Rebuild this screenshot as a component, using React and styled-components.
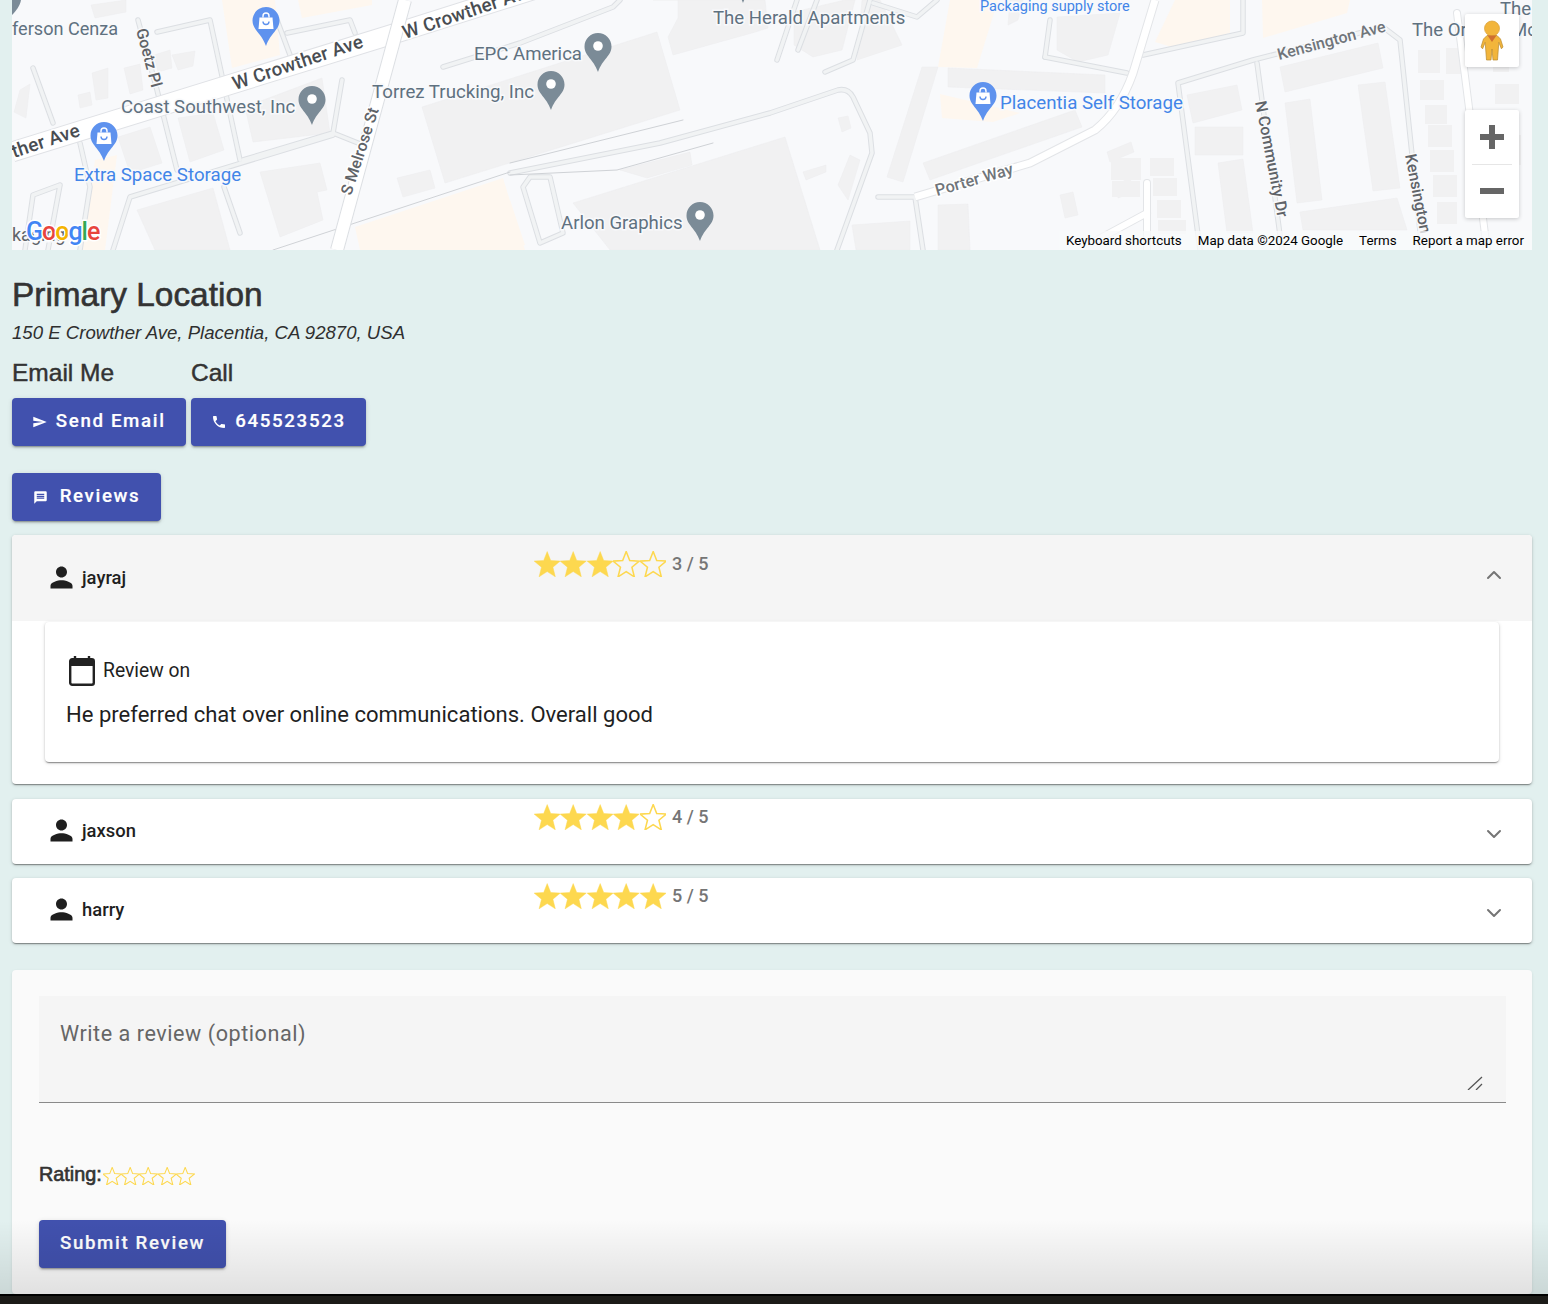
import React from 'react';
import styled, { createGlobalStyle } from 'styled-components';
import { ChevronDown, ChevronUp } from 'lucide-react';

const indigo = '#4151ae';
const star = '#fdd84f';

const cardShadow = '0 2px 1px -1px rgba(0,0,0,.28), 0 1px 2px 0 rgba(0,0,0,.2), 0 1px 4px 0 rgba(0,0,0,.12)';

const GlobalStyle = createGlobalStyle`
  html, body {
    margin: 0;
    padding: 0;
    height: 1304px;
    overflow: hidden;
    background: #e2f0ef;
    font-family: "Liberation Sans", Arial, sans-serif;
  }
`;

const Page = styled.div`
  position: relative;
  height: 1304px;
  display: flex;
  flex-direction: column;
`;
const Content = styled.main`
  flex: 1;
  padding: 0 16px 0 12px;
`;
const MapFrame = styled.div`
  position: relative;
  height: 250px;
  overflow: hidden;
  background: #f8f9fb;
  svg.base {
    display: block;
  }
`;
const ControlBox = styled.div`
  position: absolute;
  left: 1453px;
  top: ${p => p.$top}px;
  width: 54px;
  height: ${p => p.$height}px;
  background: #fff;
  border-radius: 2px;
  box-shadow: 0 1px 4px rgba(0, 0, 0, 0.2);
  display: flex;
  flex-direction: column;
  align-items: center;
  justify-content: center;
`;
const ZoomCell = styled.div`
  flex: 1;
  display: flex;
  align-items: center;
  justify-content: center;
  width: 100%;
`;
const ZoomRule = styled.div`
  width: 40px;
  height: 1px;
  background: #e6e6e6;
`;
const Attribution = styled.div`
  position: absolute;
  right: 0;
  bottom: 0;
  height: 19px;
  padding: 0 8px 1px 7px;
  box-sizing: border-box;
  display: flex;
  align-items: center;
  gap: 16px;
  background: rgba(248, 249, 251, 0.75);
  font-family: Roboto, sans-serif;
  font-size: 13.35px;
  color: #000;
  white-space: nowrap;
`;

const Title = styled.h2`
  margin: 27px 0 0;
  font-size: 33.4px;
  line-height: 36px;
  font-weight: 400;
  color: #333;
  -webkit-text-stroke: 0.6px #333;
`;
const Address = styled.p`
  margin: 9px 0 0;
  font-size: 18.6px;
  line-height: 22px;
  font-style: italic;
  color: #2f2f2f;
`;
const ContactRow = styled.div`
  display: flex;
  gap: 5px;
  margin-top: 15px;
`;
const ContactCol = styled.div`
  display: flex;
  flex-direction: column;
  gap: 11px;
`;
const ContactLabel = styled.h4`
  margin: 0;
  font-size: 24.5px;
  line-height: 28px;
  font-weight: 400;
  color: #333;
  -webkit-text-stroke: 0.45px #333;
`;
const Button = styled.button`
  display: inline-flex;
  align-items: center;
  justify-content: center;
  gap: ${p => p.$gap || 8}px;
  height: 48px;
  width: ${p => p.$width}px;
  padding: 0 0 2px;
  border: 0;
  border-radius: 4px;
  background: ${indigo};
  color: #fff;
  font-family: Roboto, sans-serif;
  font-weight: 500;
  font-size: 18.7px;
  letter-spacing: 1.65px;
  -webkit-text-stroke: 0.2px #fff;
  box-shadow: 0 3px 1px -2px rgba(0,0,0,.2), 0 2px 2px 0 rgba(0,0,0,.14), 0 1px 5px 0 rgba(0,0,0,.12);
  svg {
    margin-top: 2px;
  }
`;
const ReviewsButton = styled(Button)`
  display: flex;
  margin: 27px 0 14px;
`;
const Accordion = styled.section`
  background: #fff;
  border-radius: 4px;
  margin-bottom: ${p => p.$gap}px;
  box-shadow: ${cardShadow};
`;
const Summary = styled.div`
  display: flex;
  align-items: flex-start;
  height: ${p => (p.$open ? 86 : 65)}px;
  padding-left: 32.5px;
  padding-right: 26px;
  background: ${p => (p.$open ? '#f5f5f5' : 'transparent')};
  border-radius: 4px 4px 0 0;
`;
const Reviewer = styled.div`
  display: flex;
  align-items: center;
  gap: 4.5px;
  width: 489.5px;
  margin-top: ${p => (p.$open ? 26 : 15)}px;
  font-family: Roboto, sans-serif;
  font-weight: 500;
  font-size: 18.4px;
  line-height: 33px;
  color: #1f1f1f;
`;
const Score = styled.div`
  display: flex;
  align-items: flex-start;
  gap: 6px;
  margin-top: ${p => (p.$open ? 16 : 5)}px;
  font-family: Roboto, sans-serif;
  font-weight: 500;
  font-size: 18px;
  line-height: 26px;
  color: #757575;
`;
const Stars = styled.div`
  display: flex;
  svg {
    display: block;
  }
`;
const Chevron = styled.div`
  margin-left: auto;
  margin-top: ${p => (p.$open ? 28 : 23)}px;
  color: #757575;
  line-height: 0;
`;
const Details = styled.div`
  padding: 1px 33px 22px;
`;
const InnerCard = styled.div`
  height: 140px;
  box-sizing: border-box;
  padding: 34px 21px 0;
  background: #fff;
  border-radius: 4px;
  box-shadow: ${cardShadow};
`;
const ReviewDate = styled.div`
  display: flex;
  align-items: center;
  gap: 7px;
  padding-left: 2px;
  font-family: Roboto, sans-serif;
  font-size: 19.3px;
  line-height: 30px;
  color: #1f1f1f;
`;
const ReviewText = styled.p`
  margin: 13px 0 0;
  font-family: Roboto, sans-serif;
  font-size: 22.05px;
  line-height: 32px;
  color: #1f1f1f;
`;
const FormPanel = styled.form`
  height: 324px;
  box-sizing: border-box;
  margin-top: 27px;
  padding: 26px 26px 0 27px;
  background: #fafafa;
  border-radius: 4px;
  box-shadow: 0 1px 3px rgba(0,0,0,.1);
`;
const FakeTextarea = styled.div`
  position: relative;
  height: 107px;
  box-sizing: border-box;
  padding: 24px 21px 0;
  background: #f5f5f5;
  border-bottom: 1px solid #8a8a8a;
  font-family: Roboto, sans-serif;
  font-size: 21.6px;
  line-height: 28px;
  letter-spacing: 0.54px;
  color: #666;
`;
const Grip = styled.svg`
  position: absolute;
  right: 23px;
  bottom: 12px;
`;
const RatingRow = styled.div`
  display: flex;
  align-items: center;
  margin-top: 59px;
  height: 28px;
`;
const RatingLabel = styled.label`
  font-size: 19.8px;
  font-weight: 400;
  color: #333;
  -webkit-text-stroke: 0.65px #333;
  margin-top: -3px;
  margin-right: 1px;
`;
const SubmitRow = styled.div`
  margin-top: 30px;
`;
const BottomBar = styled.div`
  position: relative;
  height: 10px;
  border-top: 2px solid #000;
  box-sizing: border-box;
  background: #1c1b18;
`;
const Shade = styled.div`
  position: absolute;
  left: 0;
  right: 0;
  bottom: 10px;
  height: 74px;
  pointer-events: none;
  background: linear-gradient(to bottom, rgba(0,0,0,0), rgba(0,0,0,.1));
`;

const MapText = styled.text`
  font-family: Roboto, sans-serif;
  font-size: ${p => p.$size || 18}px;
  font-weight: ${p => p.$weight || 400};
  fill: ${p => p.$fill || '#5f7180'};
  stroke: ${p => p.$halo || '#f8f9fb'};
  stroke-width: 3px;
  paint-order: stroke;
  letter-spacing: ${p => p.$spacing || 0}px;
`;

const buildings = [
  [422,107,657,32,680,110,445,183], [573,203,785,137,820,250,610,250], [137,210,213,188,230,250,155,250],
  [260,172,320,163,327,190,317,192,323,220,280,237], [245,107,322,78,330,133,253,142], [178,118,213,113,224,150,190,162],
  [118,137,150,127,162,163,130,173], [397,178,430,170,435,188,403,197], [653,0,678,0,678,18,668,37,673,55,752,33,768,28,765,0],
  [887,177,922,67,938,67,903,182], [923,163,1075,110,1082,127,930,180], [948,68,1105,75,1105,93,948,87],
  [1057,17,1120,13,1108,55,1078,62,1057,50], [1187,95,1237,85,1242,110,1193,123], [1195,127,1243,127,1243,155,1195,155],
  [1218,163,1243,159,1253,233,1227,233], [1285,103,1310,99,1322,200,1297,203], [1280,67,1378,43,1383,68,1285,92],
  [1358,85,1385,82,1400,188,1373,191], [1300,212,1397,198,1407,230,1303,230], [91,5,126,0,126,12,95,18],
  [92,73,108,68,108,98,96,100], [124,68,140,64,143,90,130,94], [78,95,90,92,92,105,80,108], [20,90,30,84,26,118,14,112],
  [154,55,170,50,172,68,158,72], [172,55,195,51,193,66,178,70], [794,12,845,0,855,0,842,50,813,57,794,45],
  [862,0,880,0,902,45,857,60], [1010,0,1023,0,1018,20,1008,25], [1060,195,1073,192,1078,215,1065,218],
  [838,118,848,116,851,128,842,132], [803,172,826,165,826,172,806,180], [838,185,850,155,860,160,848,200],
  [852,225,910,221,910,250,856,250], [938,205,968,204,970,250,938,250], [620,170,690,152,692,165,647,178],
  [1115,185,1130,178,1134,192,1118,198], [1107,152,1131,142,1134,152,1110,162]
];
const blocks = [
  [1418,50,22,23],[1420,80,24,20],[1425,105,22,19],[1428,125,24,22],[1430,150,24,22],[1433,175,24,22],[1437,202,20,22],[1446,48,18,26],
  [1493,50,16,22],[1495,84,24,20],[1499,135,22,30],[1488,178,20,28],[1111,158,30,22],[1150,158,24,18],[1153,178,24,18],[1157,200,24,18],
  [1112,181,28,16],[1158,220,28,14]
];
const beiges = [
  [222,0,275,0,280,55,232,68], [298,0,372,0,372,5,302,18], [355,227,503,178,525,250,360,250], [95,160,117,155,105,250,82,250],
  [938,67,977,68,998,0,950,0], [940,94,1020,113,993,122,942,118], [1155,42,1175,48,1230,33,1230,0,1175,0],
  [1262,0,1350,0,1347,13,1263,38], [510,200,525,245,510,250]
];
const lanes = [
  'M138 20L157 90L177 170M224 187L240 233', 'M157 32L210 20L240 160', 'M287 33L350 20L355 33M277 20L290 55',
  'M33 68L53 123M80 143L90 187L80 250', 'M342 80L333 133L243 160M333 133L358 143', 'M333 135L130 197L113 250',
  'M443 67L520 43L613 7L620 0', 'M510 173L660 143L770 113L838 90Q848 88 853 97L870 133L872 153L837 250',
  'M523 187L530 177L550 177L563 233L540 243Z', 'M878 197L915 197L923 250', 'M797 0L777 60', 'M817 0L798 50',
  'M870 0L853 60L825 72', 'M873 3L917 17L937 0', 'M1243 0L1243 33L1143 55', 'M1045 57L1127 73', 'M1050 20L1045 57',
  'M1200 250L1178 83L1253 60L1383 27L1400 40L1422 250', 'M1257 63L1282 250', 'M25 250L33 195L60 185M60 185L48 250'
];
const labels = [
  { x: 12, y: 35, t: 'ferson Cenza', size: 18.1 },
  { x: 136, y: 30, t: 'Goetz Pl', size: 16, weight: 500, fill: '#5f6368', r: 75 },
  { x: 235, y: 90, t: 'W Crowther Ave', size: 18.8, weight: 500, fill: '#494d52', halo: '#fff', r: -18.5, sp: 0.2 },
  { x: 405, y: 39, t: 'W Crowther Ave', size: 18.8, weight: 500, fill: '#494d52', halo: '#fff', r: -18.5, sp: 0.2 },
  { x: 14, y: 158, t: 'ther Ave', size: 18.8, weight: 500, fill: '#494d52', halo: '#fff', r: -18.5, sp: 0.2 },
  { x: 121, y: 113, t: 'Coast Southwest, Inc', size: 18.6 },
  { x: 474, y: 60, t: 'EPC America', size: 18.6 },
  { x: 372, y: 98, t: 'Torrez Trucking, Inc', size: 18.7 },
  { x: 351, y: 196, t: 'S Melrose St', size: 16, weight: 500, fill: '#5f6368', halo: '#fff', r: -72 },
  { x: 74, y: 181, t: 'Extra Space Storage', size: 18.7, fill: '#4285e8' },
  { x: 713, y: 24, t: 'The Herald Apartments', size: 18.6 },
  { x: 980, y: 11, t: 'Packaging supply store', size: 14.5, fill: '#4285e8' },
  { x: 1000, y: 109, t: 'Placentia Self Storage', size: 18.7, fill: '#4285e8' },
  { x: 937, y: 196, t: 'Porter Way', size: 16.3, weight: 500, fill: '#70757a', halo: '#fff', r: -16 },
  { x: 1279, y: 60, t: 'Kensington Ave', size: 16, weight: 500, fill: '#70757a', r: -15 },
  { x: 1255, y: 102, t: 'N Community Dr', size: 16, weight: 500, fill: '#5f6368', r: 79 },
  { x: 1405, y: 155, t: 'Kensington', size: 16, weight: 500, fill: '#5f6368', r: 79 },
  { x: 1412, y: 36, t: 'The Or', size: 18.6 },
  { x: 1500, y: 15, t: 'The', size: 18.6 },
  { x: 1511, y: 36, t: 'Mc', size: 18.6 },
  { x: 561, y: 229, t: 'Arlon Graphics', size: 18.6 },
  { x: 12, y: 241, t: 'kaging', size: 18, fill: '#5f6368' }
];
const grayPins = [[312, 86], [598, 33], [551, 71], [700, 202], [743, -36]];
const bluePins = [[266, 7], [104, 122], [983, 82]];

const points = arr => arr.join(' ');

const Pin = ({ x, y, color, children }) => (
  <g transform={`translate(${x - 13.5} ${y})`}>
    <path
      d="M13.5 0C6 0 0 6 0 13.5 0 23 9 26 13.5 39 18 26 27 23 27 13.5 27 6 21 0 13.5 0Z"
      fill={color}
    />
    {children}
  </g>
);

const MapDrawing = () => (
  <svg className="base" width="1520" height="250" viewBox="12 0 1520 250">
    <rect x="12" y="0" width="1520" height="250" fill="#f8f9fb" />
    {beiges.map((b, i) => <polygon key={i} points={points(b)} fill="#fef7ef" />)}
    {buildings.map((b, i) => <polygon key={i} points={points(b)} fill="#f1f1f2" stroke="#ececee" strokeWidth="0.5" />)}
    {blocks.map(([x, y, w, h], i) => <rect key={i} x={x} y={y} width={w} height={h} fill="#f1f1f2" />)}
    <g fill="none" strokeLinecap="round" strokeLinejoin="round">
      {lanes.map((d, i) => <path key={i} d={d} stroke="#dcdfe3" strokeWidth="5.5" />)}
      {lanes.map((d, i) => <path key={i} d={d} stroke="#f1f3f4" strokeWidth="3.5" />)}
      <path d="M273 250L510 172M510 163L683 120M510 175L617 170L713 143" stroke="#cfd2d6" strokeWidth="1" />
      <path d="M12 152L390 35L545 -14" stroke="#e0e2e6" strokeWidth="21" strokeLinecap="butt" />
      <path d="M12 152L390 35L545 -14" stroke="#fff" strokeWidth="19" strokeLinecap="butt" />
      <path d="M405 0L337 250" stroke="#dcdfe3" strokeWidth="14" strokeLinecap="butt" />
      <path d="M405 0L337 250" stroke="#fff" strokeWidth="12" strokeLinecap="butt" />
      <path d="M1155 0L1133 73Q1120 110 1095 130L1030 163L915 197" stroke="#e3e5e8" strokeWidth="9" strokeLinecap="butt" />
      <path d="M1155 0L1133 73Q1120 110 1095 130L1030 163L915 197" stroke="#fff" strokeWidth="7" strokeLinecap="butt" />
      <path d="M1457 13L1487 250" stroke="#e3e5e8" strokeWidth="8" />
      <path d="M1457 13L1487 250" stroke="#fff" strokeWidth="6" />
      <path d="M1147 183L1147 250M1147 213L1097 240" stroke="#e3e5e8" strokeWidth="8" />
      <path d="M1147 183L1147 250M1147 213L1097 240" stroke="#fff" strokeWidth="6" />
    </g>
    <path d="M12 0H21C20 6 16 11 12 15Z" fill="#7b8b97" />
    {labels.map(l => (
      <MapText
        key={l.t + l.x}
        x={l.x}
        y={l.y}
        $size={l.size}
        $weight={l.weight}
        $fill={l.fill}
        $halo={l.halo}
        $spacing={l.sp}
        transform={l.r ? `rotate(${l.r} ${l.x} ${l.y})` : undefined}
      >
        {l.t}
      </MapText>
    ))}
    {grayPins.map(([x, y]) => (
      <Pin key={x} x={x} y={y} color="#7b8b97">
        <circle cx="13.5" cy="13" r="4.8" fill="#fff" />
      </Pin>
    ))}
    {bluePins.map(([x, y]) => (
      <Pin key={x} x={x} y={y} color="#5e92ee">
        <path d="M7 10.5H20L21 22H6Z" fill="#fff" />
        <path d="M10.5 10.5V9A3 3 0 0 1 16.5 9V10.5" fill="none" stroke="#fff" strokeWidth="1.4" />
        <path d="M10.5 14.5A3 3 0 0 0 16.5 14.5" fill="none" stroke="#5e92ee" strokeWidth="1.4" />
      </Pin>
    ))}
    <MapText x="26" y="240" $size={25} $weight={500} $fill="#4285f4" $halo="#fff" $spacing={-1}>
      G<tspan fill="#e8453c">o</tspan><tspan fill="#f4b400">o</tspan><tspan fill="#4285f4">g</tspan><tspan fill="#34a853">l</tspan><tspan fill="#e8453c">e</tspan>
    </MapText>
  </svg>
);

const Pegman = () => (
  <svg width="24" height="41" viewBox="0 0 24 41">
    <path d="M7 15.5L3.5 19 1 27l1.6 1.8 2.6-6.5L6.5 40h4.5l1-11 1 11h4.5l1.3-17.7 2.6 6.5L23 27l-2.5-8-3.5-3.5Z" fill="#f2b53b" stroke="#b98a2e" strokeWidth="0.7" />
    <circle cx="12" cy="8.5" r="7.5" fill="#f2b53b" stroke="#d89e33" strokeWidth="0.7" />
    <path d="M7.5 15.5H16.5L12 22Z" fill="#cf6f30" />
  </svg>
);

const StarIcon = ({ filled, size }) => (
  <svg width={size} height={size} viewBox="0 0 24 24">
    <polygon
      points="12,0.5 15.2,8.6 23.9,9.2 17.2,14.7 19.4,23.5 12,18.7 4.6,23.5 6.8,14.7 0.1,9.2 8.8,8.6"
      fill={filled ? star : 'none'}
      stroke={star}
      strokeWidth={filled ? 0.4 : 1.4}
    />
  </svg>
);

const StarRow = ({ value = 0, size = 26.4 }) => (
  <Stars>
    {[1, 2, 3, 4, 5].map(n => <StarIcon key={n} size={size} filled={n <= value} />)}
  </Stars>
);

const MuiIcon = ({ d, size = 24, color = 'currentColor', sx = 1 }) => (
  <svg width={size * sx} height={size} viewBox="0 0 24 24" preserveAspectRatio="none" fill={color}>
    <path d={d} />
  </svg>
);

const icons = {
  person: 'M12 12c2.21 0 4-1.79 4-4s-1.79-4-4-4-4 1.79-4 4 1.79 4 4 4zm0 2c-2.67 0-8 1.34-8 4v2h16v-2c0-2.66-5.33-4-8-4z',
  send: 'M2.01 21L23 12 2.01 3 2 10l15 2-15 2z',
  phone: 'M6.62 10.79c1.44 2.83 3.76 5.14 6.59 6.59l2.2-2.2c.27-.27.67-.36 1.02-.24 1.12.37 2.33.57 3.57.57.55 0 1 .45 1 1V20c0 .55-.45 1-1 1-9.39 0-17-7.61-17-17 0-.55.45-1 1-1h3.5c.55 0 1 .45 1 1 0 1.25.2 2.45.57 3.57.11.35.03.74-.25 1.02l-2.2 2.2z',
  message: 'M20 2H4c-1.1 0-1.99.9-1.99 2L2 22l4-4h14c1.1 0 2-.9 2-2V4c0-1.1-.9-2-2-2zm-2 12H6v-2h12v2zm0-3H6V9h12v2zm0-3H6V6h12v2z'
};

const CalendarIcon = () => (
  <svg width="28" height="30" viewBox="0 0 28 30">
    <path d="M7 0V4M21 0V4" stroke="#222" strokeWidth="2.4" />
    <rect x="2.2" y="3.2" width="23.6" height="25.6" rx="2" fill="#fff" stroke="#222" strokeWidth="2.4" />
    <rect x="2.2" y="3.2" width="23.6" height="6.8" fill="#222" />
  </svg>
);

const reviews = [
  { name: 'jayraj', rating: 3, open: true, gap: 15, text: 'He preferred chat over online communications. Overall good' },
  { name: 'jaxson', rating: 4, gap: 14 },
  { name: 'harry', rating: 5, gap: 0 }
];

const ReviewItem = ({ name, rating, open, gap, text }) => (
  <Accordion $gap={gap}>
    <Summary $open={open}>
      <Reviewer $open={open}>
        <MuiIcon d={icons.person} size={33} />
        {name}
      </Reviewer>
      <Score $open={open}>
        <StarRow value={rating} />
        <span>{rating} / 5</span>
      </Score>
      <Chevron $open={open}>
        {open ? <ChevronUp size={24} strokeWidth={2} /> : <ChevronDown size={24} strokeWidth={2} />}
      </Chevron>
    </Summary>
    {open && (
      <Details>
        <InnerCard>
          <ReviewDate>
            <CalendarIcon />
            Review on
          </ReviewDate>
          <ReviewText>{text}</ReviewText>
        </InnerCard>
      </Details>
    )}
  </Accordion>
);

const App = () => (
  <Page>
    <GlobalStyle />
    <Content>
      <MapFrame>
        <MapDrawing />
        <ControlBox $top={14} $height={53}>
          <Pegman />
        </ControlBox>
        <ControlBox $top={110} $height={108}>
          <ZoomCell>
            <svg width="24" height="24" viewBox="0 0 24 24"><path d="M9 0h6v9h9v6H15v9H9V15H0V9h9z" fill="#666" /></svg>
          </ZoomCell>
          <ZoomRule />
          <ZoomCell>
            <svg width="24" height="6" viewBox="0 0 24 6"><rect width="24" height="6" fill="#666" /></svg>
          </ZoomCell>
        </ControlBox>
        <Attribution>
          <span>Keyboard shortcuts</span>
          <span>Map data ©2024 Google</span>
          <span>Terms</span>
          <span>Report a map error</span>
        </Attribution>
      </MapFrame>

      <Title>Primary Location</Title>
      <Address>150 E Crowther Ave, Placentia, CA 92870, USA</Address>
      <ContactRow>
        <ContactCol>
          <ContactLabel>Email Me</ContactLabel>
          <Button $width={174} type="button">
            <MuiIcon d={icons.send} size={14} sx={1.1} />
            Send Email
          </Button>
        </ContactCol>
        <ContactCol>
          <ContactLabel>Call</ContactLabel>
          <Button $width={175} type="button">
            <MuiIcon d={icons.phone} size={16} />
            645523523
          </Button>
        </ContactCol>
      </ContactRow>
      <ReviewsButton $width={149} $gap={12} type="button">
        <MuiIcon d={icons.message} size={15} />
        Reviews
      </ReviewsButton>

      {reviews.map(r => <ReviewItem key={r.name} {...r} />)}

      <FormPanel>
        <FakeTextarea>
          Write a review (optional)
          <Grip width="16" height="14" viewBox="0 0 16 14">
            <path d="M1 14L15 1M9 14L15 8" stroke="#555" strokeWidth="1.3" />
          </Grip>
        </FakeTextarea>
        <RatingRow>
          <RatingLabel>Rating:</RatingLabel>
          <StarRow size={18.4} />
        </RatingRow>
        <SubmitRow>
          <Button $width={187} type="button">Submit Review</Button>
        </SubmitRow>
      </FormPanel>
    </Content>
    <BottomBar>
      <Shade />
    </BottomBar>
  </Page>
);

export default App;
